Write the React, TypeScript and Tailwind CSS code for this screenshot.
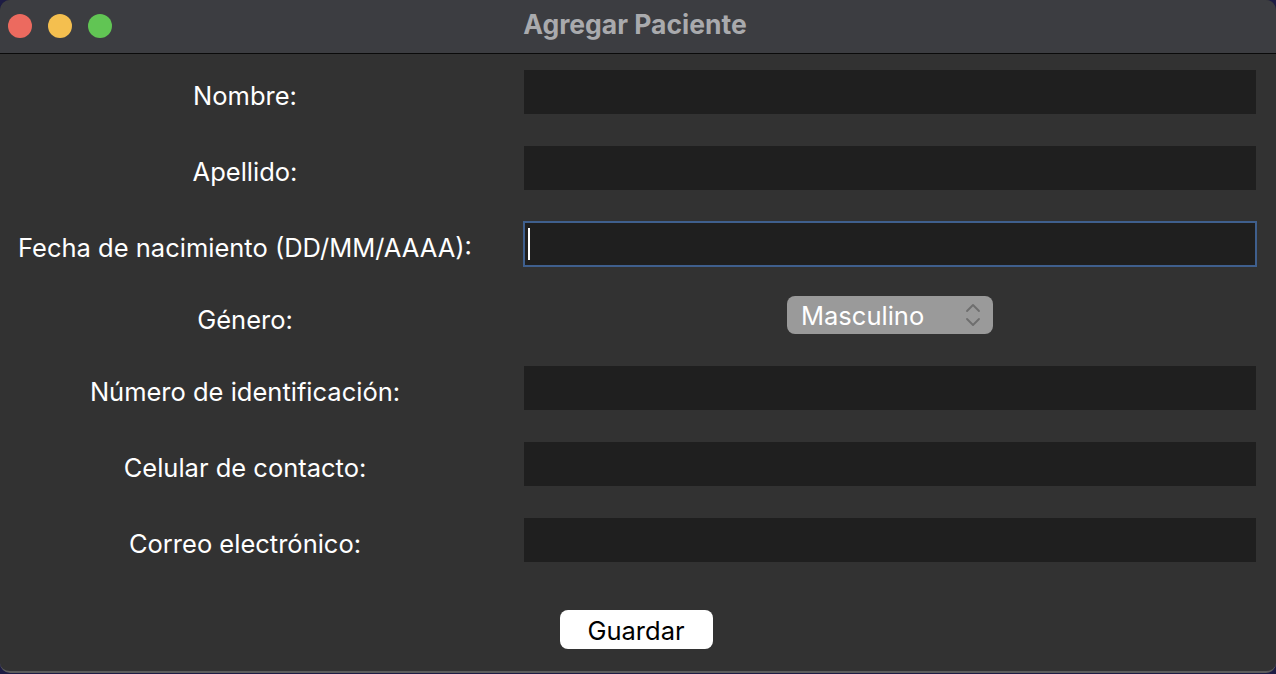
import React from 'react';

const FIELDS_TOP = ['Nombre:', 'Apellido:'];
const FIELDS_BOTTOM = ['Número de identificación:', 'Celular de contacto:', 'Correo electrónico:'];

const font = { fontFamily: 'Inter, "Liberation Sans", sans-serif' };

function Row({ label, children, h = 'h-[44px]' }: { label: string; children: React.ReactNode; h?: string }) {
  return (
    <div className={`flex items-center ${h}`}>
      <div className="w-[490px] pt-[9px] text-center text-[25.5px] text-white">{label}</div>
      <div className="ml-[34px] flex flex-1 items-center">{children}</div>
    </div>
  );
}

function Input() {
  return <div className="h-[44px] w-[732px] bg-[#1f1f1f]" />;
}

export default function App() {
  return (
    <div className="h-[674px] w-[1276px] overflow-hidden bg-[#1d1c44]" style={font}>
      <div className="flex h-[673px] flex-col overflow-hidden rounded-[10px] border-b-2 border-[#5c5c5c] bg-[#323232]">
        {/* Title bar */}
        <div className="relative flex h-[54px] shrink-0 items-center justify-center border-b border-[#0a0a0a] bg-[#3c3d41]">
          <div className="absolute left-[8px] top-[14px] flex gap-[16px]">
            <span className="h-[24px] w-[24px] rounded-full bg-[#ec6a5f]" />
            <span className="h-[24px] w-[24px] rounded-full bg-[#f4bf4f]" />
            <span className="h-[24px] w-[24px] rounded-full bg-[#61c554]" />
          </div>
          <div className="pb-[3px] pr-[6px] text-[26.5px] font-bold text-[#a9aaad]">Agregar Paciente</div>
        </div>

        {/* Form */}
        <div className="flex flex-col gap-[32px] pt-[16px]">
          {FIELDS_TOP.map(l => (
            <Row key={l} label={l}><Input /></Row>
          ))}
          <Row label="Fecha de nacimiento (DD/MM/AAAA):">
            <div className="-mx-[1px] -my-[1px] flex h-[46px] w-[734px] items-center border-2 border-[#3f5f8d] bg-[#1f1f1f] px-[3px]">
              <span className="h-[32px] w-[2px] bg-white" />
            </div>
          </Row>
          <Row label="Género:" h="h-[36px]">
            <div className="flex w-[732px] justify-center">
              <div className="-mt-[2px] flex h-[38px] w-[206px] items-center justify-between rounded-[8px] bg-[#9a9a9a] pl-[14px] pr-[12px]">
                <span className="pt-[3px] text-[25.5px] text-white">Masculino</span>
                <svg width="16" height="26" viewBox="0 0 16 26" fill="none" stroke="#6e6e6e" strokeWidth="1.8" strokeLinecap="round" strokeLinejoin="round">
                  <path d="M2 9l6-6 6 6" /><path d="M2 17l6 6 6-6" />
                </svg>
              </div>
            </div>
          </Row>
          {FIELDS_BOTTOM.map(l => (
            <Row key={l} label={l}><Input /></Row>
          ))}
        </div>

        <div className="mt-[48px] flex justify-center pr-[4px]">
          <button className="h-[39px] w-[153px] rounded-[8px] bg-white pt-[2px] text-[25.5px] text-black">Guardar</button>
        </div>
      </div>
    </div>
  );
}
